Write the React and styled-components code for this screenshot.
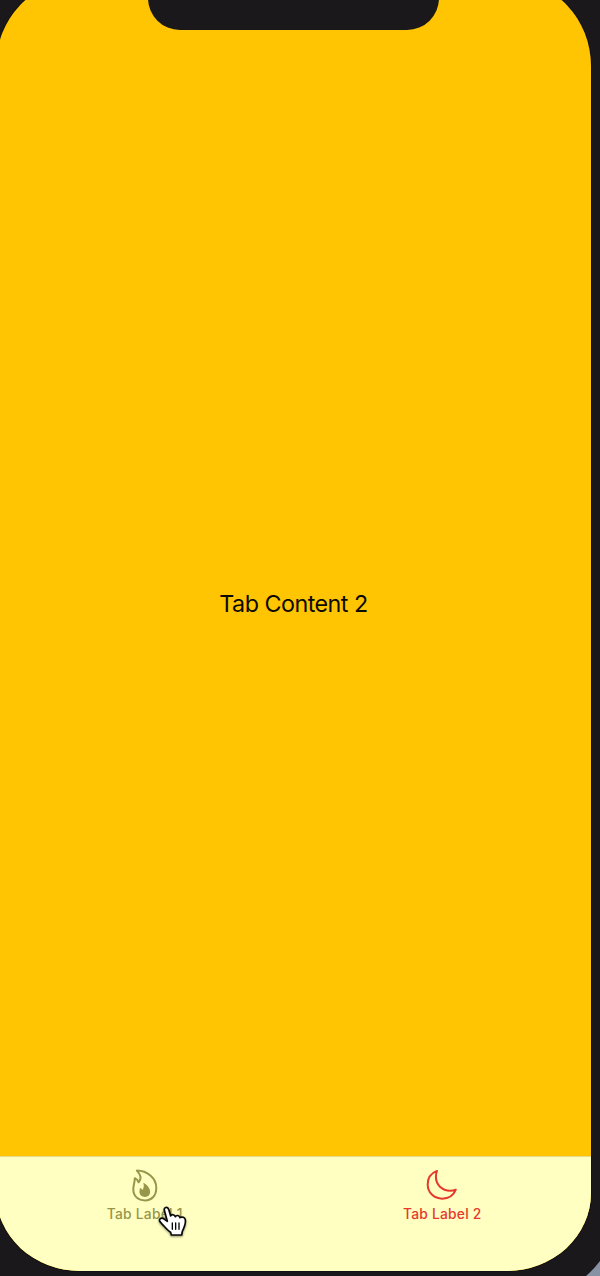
import React from "react";
import styled, { createGlobalStyle } from "styled-components";

const GlobalStyle = createGlobalStyle`
  * { box-sizing: border-box; }
  body { margin: 0; background: #1a181a; overflow: hidden; }
`;

const Device = styled.div`
  position: relative;
  height: 1276px;
  padding: 0 9px 5px 0;
  background: #1a181a;
  overflow: hidden;
  font-family: Inter, "Liberation Sans", sans-serif;
`;

const Screen = styled.main`
  display: flex;
  flex-direction: column;
  height: 1291px;
  margin: -20px 0 0 -4px;
  border-radius: 82px 82px 84px 84px / 86px 86px 78px 78px;
  overflow: hidden;
  background: #ffc402;
  box-shadow: 0 0 0 1px #121114;
`;

const Notch = styled.div`
  flex: none;
  align-self: center;
  width: 291px;
  height: 49.5px;
  border-radius: 0 0 32px 32px;
  background: #1a181a;
`;

const Content = styled.section`
  flex: 1;
  display: flex;
  align-items: center;
  justify-content: center;
  padding-top: 22.5px;
  color: #0c0a04;
  font-size: 23.3px;
  line-height: 28px;
  letter-spacing: -0.52px;
`;

const TabBar = styled.nav`
  flex: none;
  display: flex;
  height: 115px;
  background: #ffffc2;
  border-top: 1px solid #e8d98c;
`;

const Tab = styled.div`
  flex: 1;
  display: flex;
  flex-direction: column;
  align-items: center;
  padding-top: 11px;
  color: ${(p) => (p.$active ? "#e6392e" : "#98964a")};
`;

const TabIcon = styled.svg`
  display: block;
  width: 36px;
  height: 36px;
`;

const Label = styled.span`
  font-size: 13.8px;
  font-weight: 530;
  line-height: 21px;
  letter-spacing: 0.25px;
  white-space: nowrap;
`;

const Cursor = styled.svg`
  position: absolute;
  left: 154px;
  top: 1203px;
  width: 36px;
  height: 40px;
  filter: drop-shadow(0 1px 1px rgba(0, 0, 0, 0.45));
`;

const CornerGap = styled.svg`
  position: absolute;
  right: 0;
  bottom: 0;
  width: 14px;
  height: 15px;
`;

const FlameIcon = () => (
  <TabIcon viewBox="0 0 36 36" fill="none" stroke="currentColor" strokeWidth="2" strokeLinejoin="round">
    <path d="M9.8 2.6C20 2.8 29.3 9.6 29.3 19.9C29.3 27.4 24.8 32.4 18 32.4C11 32.4 6.3 28 6.3 21.2C6.3 17.2 7.8 14.6 7.8 10.2C9.7 11 10.8 12.3 11.6 14.3C14.5 10.8 13.8 6.5 9.8 2.6Z" />
    <path fill="currentColor" stroke="none" d="M16.3 14.8C20.3 17 23.1 20.2 23.1 23.8C23.1 27 21 29 18 29C14.7 29 12.4 26.8 12.4 23.8C12.4 22.4 12.9 21.3 12.9 19.9C14 20.2 14.9 21 15.4 22C16.9 20.2 17.2 17.6 16.3 14.8Z" />
  </TabIcon>
);

const MoonIcon = () => (
  <TabIcon viewBox="0 0 36 36" fill="none" stroke="currentColor" strokeWidth="2" strokeLinejoin="round">
    <path d="M13 2.9C7.3 5.1 3.7 10.2 3.7 16.4C3.7 24.5 10.1 30.7 18.2 30.7C24.4 30.7 29.6 27.2 31.8 21.7C30 22.4 28.2 22.7 26.1 22.7C18 22.7 11.9 16.7 11.9 8.8C11.9 6.6 12.2 4.8 13 2.9Z" />
  </TabIcon>
);

const HandCursor = () => (
  <Cursor viewBox="0 0 108 120" strokeLinejoin="round" strokeLinecap="round">
    <path
      fill="#fff"
      stroke="#080808"
      strokeWidth="5"
      d="M31 22C29 12 40 10 44 19L50 39C53 33 61 34 64 41C68 35 76 37 78 44C84 40 93 43 94 51C96 63 89 77 85 85L83 96H52L50 88C40 82 31 70 25 64L18 56C14 50 19 44 27 46L40 55Z"
    />
    <path fill="none" stroke="#080808" strokeWidth="4" d="M55 60V79M65 60V79M75 60V79" />
  </Cursor>
);

export default function App() {
  return (
    <Device>
      <GlobalStyle />
      <Screen>
        <Notch />
        <Content>Tab Content 2</Content>
        <TabBar>
          <Tab><FlameIcon /><Label>Tab Label 1</Label></Tab>
          <Tab $active><MoonIcon /><Label>Tab Label 2</Label></Tab>
        </TabBar>
      </Screen>
      <CornerGap viewBox="0 0 14 15">
        <path d="M14 0Q8 8 0 15H14Z" fill="#8793a5" />
      </CornerGap>
      <HandCursor />
    </Device>
  );
}
